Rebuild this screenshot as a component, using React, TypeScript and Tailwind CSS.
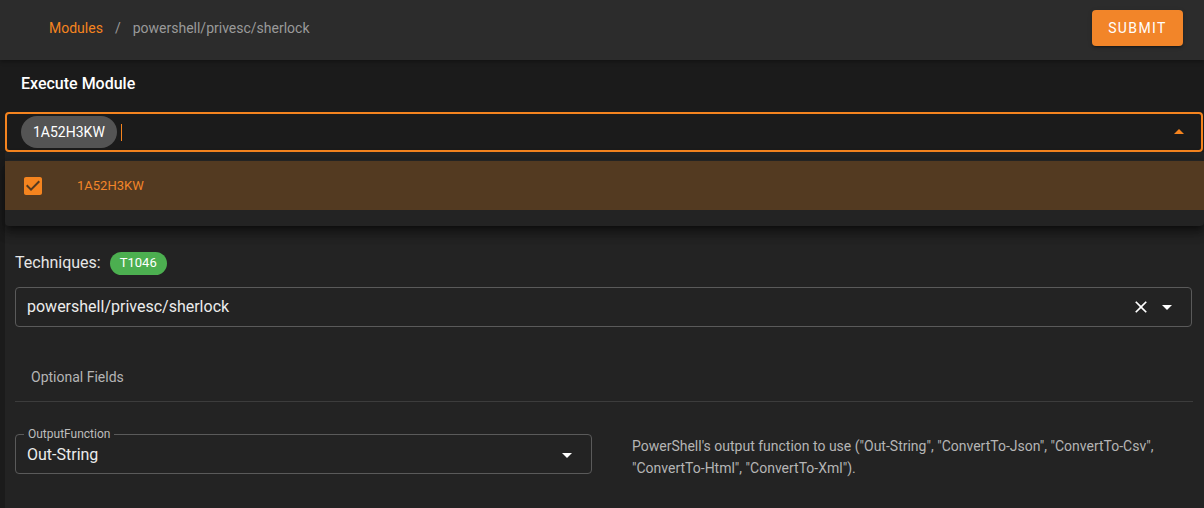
import React from "react";

function ArrowDrop({ up = false, className = "" }: { up?: boolean; className?: string }) {
  return (
    <svg viewBox="0 0 24 24" width="24" height="24" className={className} style={up ? { transform: "rotate(180deg)" } : undefined}>
      <path d="M7 10l5 5 5-5z" fill="currentColor" />
    </svg>
  );
}

function CloseIcon() {
  return (
    <svg viewBox="0 0 24 24" width="20" height="20" className="text-white">
      <path
        fill="currentColor"
        d="M19 6.41 17.59 5 12 10.59 6.41 5 5 6.41 10.59 12 5 17.59 6.41 19 12 13.41 17.59 19 19 17.59 13.41 12z"
      />
    </svg>
  );
}

function CheckBoxIcon() {
  return (
    <svg viewBox="0 0 24 24" width="24" height="24" className="text-[#f5841f]">
      <path
        fill="currentColor"
        d="M19 3H5c-1.11 0-2 .9-2 2v14c0 1.1.89 2 2 2h14c1.11 0 2-.9 2-2V5c0-1.1-.89-2-2-2zm-9 14l-5-5 1.41-1.41L10 14.17l7.59-7.59L19 8l-9 9z"
      />
    </svg>
  );
}

export default function App() {
  return (
    <div className="w-[1204px] h-[508px] overflow-hidden bg-[#1b1b1b] font-['Roboto',sans-serif] text-white">
      {/* Header */}
      <header className="h-[60px] bg-[#2c2c2c] flex items-start justify-between pl-[49px] pr-[21px] pt-[10px] shadow-[0_2px_4px_rgba(0,0,0,0.3)] relative z-10">
        <nav className="h-[36px] flex items-center text-[14px]">
          <span className="text-[#f5841f]">Modules</span>
          <span className="ml-[12px] text-[#9a9a9a]">/</span>
          <span className="ml-[12px] text-[#9a9a9a]">powershell/privesc/sherlock</span>
        </nav>
        <button className="h-[36px] w-[91px] rounded-[4px] bg-[#f28529] text-white text-[14px] font-normal tracking-[0.1em] shadow-[0_3px_1px_-2px_rgba(0,0,0,0.2),0_2px_2px_rgba(0,0,0,0.14),0_1px_5px_rgba(0,0,0,0.12)]">
          SUBMIT
        </button>
      </header>

      {/* Title */}
      <div className="h-[47px] flex items-center pl-[21px] text-[16px] font-medium">Execute Module</div>

      {/* Agent autocomplete */}
      <div className="mt-[5px] ml-[5px] w-[1198px] h-[40px] border-2 border-[#f5841f] rounded-[4px] flex items-center pl-[14px] pr-[10px]">
        <span className="h-[32px] px-[12px] rounded-full bg-[#545454] flex items-center text-[14px] text-white">1A52H3KW</span>
        <span className="ml-[4px] w-px h-[17px] bg-[#f5841f]" />
        <span className="flex-1" />
        <ArrowDrop up className="text-[#f5841f]" />
      </div>

      {/* Paper */}
      <div className="relative ml-[5px] h-[356px] bg-[#232323] pl-[10px]">
        {/* Popup listbox */}
        <div className="absolute left-0 top-[8px] w-[1199px] h-[66px] bg-[#232323] rounded-[4px] shadow-[0_5px_5px_-3px_rgba(0,0,0,0.35),0_8px_10px_1px_rgba(0,0,0,0.25),0_3px_14px_2px_rgba(0,0,0,0.2)] z-10">
          <div className="mt-px h-[49px] bg-[#533a21] flex items-center pl-[16px]">
            <CheckBoxIcon />
            <span className="ml-[32px] text-[13px] text-[#f28529]">1A52H3KW</span>
          </div>
        </div>

        <div className="pt-[100px]">
          <div className="h-[22px] flex items-center">
            <span className="text-[16px] text-[#e6e6e6]">Techniques:</span>
            <span className="ml-[9px] h-[23px] px-[10px] rounded-full bg-[#4caf50] flex items-center text-[13px] text-white">T1046</span>
          </div>

          <div className="mt-[13px] w-[1177px] h-[40px] border border-[#5a5a5a] rounded-[4px] flex items-center pl-[11px] pr-[12px]">
            <span className="text-[16px] text-[#ececec]">powershell/privesc/sherlock</span>
            <span className="flex-1" />
            <CloseIcon />
            <ArrowDrop className="ml-[4px] text-white" />
          </div>

          <div className="mt-[26px] w-[1178px] h-[49px] flex items-center pl-[16px] border-b border-[#3c3c3c] text-[14px] text-[#b5b5b5]">
            Optional Fields
          </div>

          <div className="mt-[32px] flex items-start">
            <div className="relative w-[577px] h-[40px] border border-[#5a5a5a] rounded-[4px] flex items-center pl-[11px] pr-[12px] pt-[2px]">
              <span className="absolute left-[8px] top-[-8px] px-[4px] bg-[#232323] text-[12px] leading-[14px] text-[#bdbdbd]">OutputFunction</span>
              <span className="text-[16px] text-[#ececec]">Out-String</span>
              <span className="flex-1" />
              <ArrowDrop className="text-white" />
            </div>
            <p className="ml-[40px] mt-[1px] w-[540px] text-[14px] leading-[22px] text-[#b5b5b5]">
              PowerShell's output function to use ("Out-String", "ConvertTo-Json", "ConvertTo-Csv", "ConvertTo-Html", "ConvertTo-Xml").
            </p>
          </div>
        </div>
      </div>
    </div>
  );
}
